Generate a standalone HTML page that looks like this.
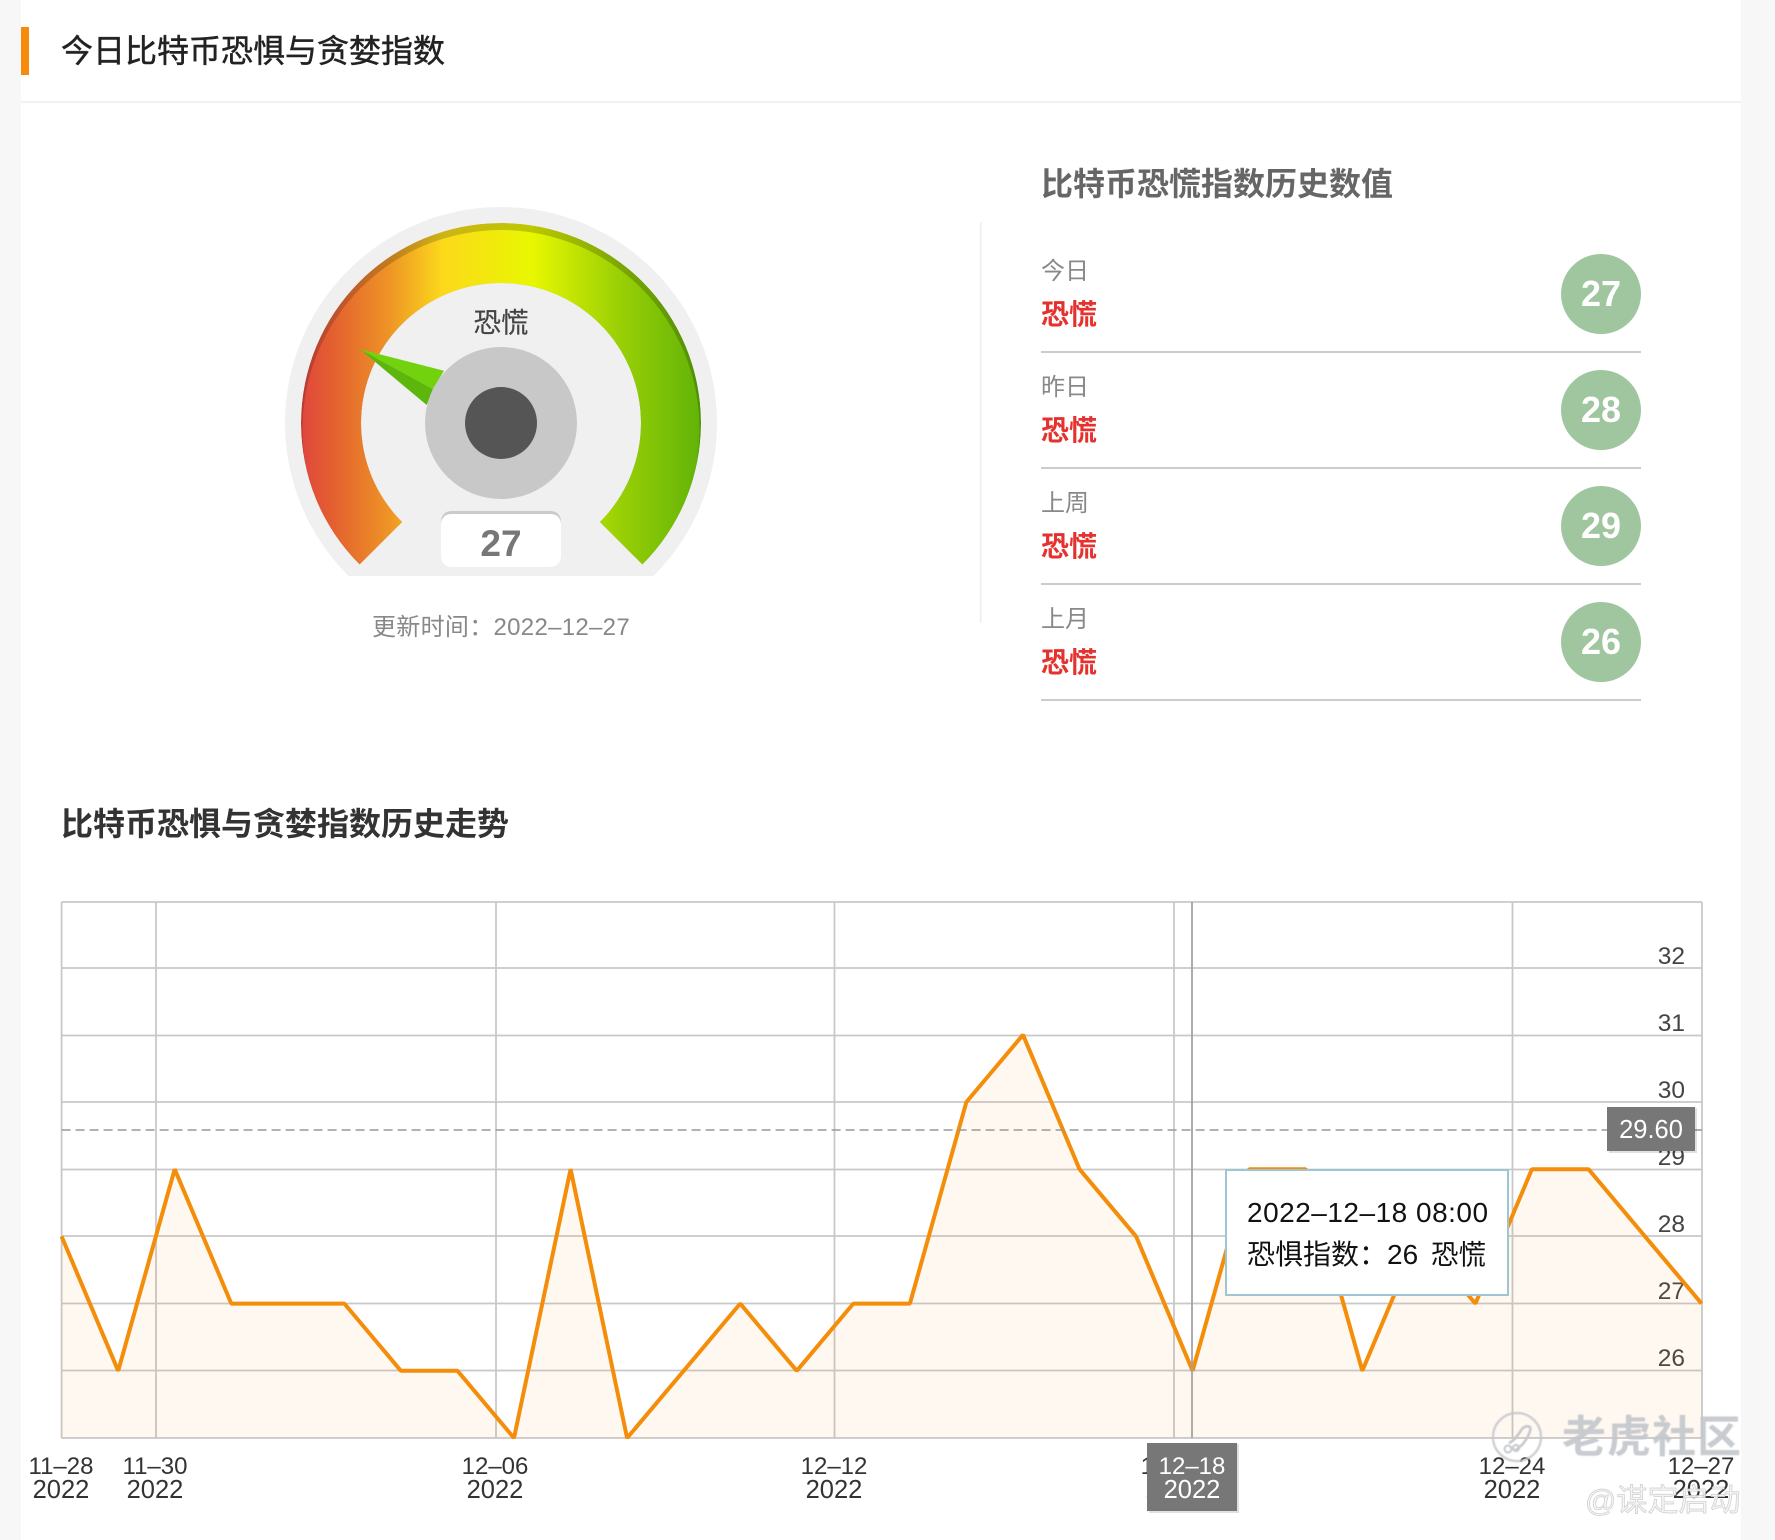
<!DOCTYPE html>
<html lang="zh-CN">
<head>
<meta charset="utf-8">
<title>今日比特币恐惧与贪婪指数</title>
<style>
html,body{margin:0;padding:0;background:#f7f7f7;}
body{width:1775px;height:1540px;overflow:hidden;position:relative;}
svg{position:absolute;left:0;top:0;display:block;}
text{font-family:"Liberation Sans","Noto Sans CJK SC",sans-serif;}
.t{font-weight:700;font-size:32px;}
.yl{font-size:24.5px;fill:#444;text-anchor:end;}
.xl{font-size:24px;fill:#333;text-anchor:middle;}
.xl .y{font-size:25.5px;}
.lab{font-size:24px;fill:#888;}
.red{font-size:28px;fill:#e5322f;font-weight:700;}
.num{font-size:36px;fill:#fff;font-weight:700;text-anchor:middle;}
.grid line{stroke:#c8c8c8;stroke-width:1.8;}
</style>
</head>
<body>
<svg width="1775" height="1540" viewBox="0 0 1775 1540" xmlns="http://www.w3.org/2000/svg">
<defs>
<linearGradient id="g" gradientUnits="userSpaceOnUse" x1="301" y1="0" x2="701" y2="0">
<stop offset="0" stop-color="#e0463e"/><stop offset=".08" stop-color="#e3602f"/><stop offset=".22" stop-color="#ee9426"/><stop offset=".355" stop-color="#fcd91b"/><stop offset=".577" stop-color="#e8f700"/><stop offset=".8" stop-color="#98cf05"/><stop offset="1" stop-color="#62b308"/>
</linearGradient>
<linearGradient id="gd" gradientUnits="userSpaceOnUse" x1="301" y1="0" x2="701" y2="0">
<stop offset="0" stop-color="#b93a33"/><stop offset=".22" stop-color="#c27a20"/><stop offset=".355" stop-color="#cdb416"/><stop offset=".577" stop-color="#bcc800"/><stop offset=".8" stop-color="#7ca604"/><stop offset="1" stop-color="#4f9006"/>
</linearGradient>
<clipPath id="arc"><path d="M359.6,564.4 A200,200 0 1 1 642.4,564.4 L600,522 A140,140 0 1 0 402,522 Z"/></clipPath>
<clipPath id="bot"><rect x="270" y="190" width="470" height="386"/></clipPath>
<clipPath id="wm"><rect x="1480" y="1390" width="261" height="140"/></clipPath>
<filter id="soft" x="-5%" y="-5%" width="110%" height="110%"><feGaussianBlur stdDeviation=".55"/></filter>
</defs>

<!-- panel -->
<rect x="21" y="0" width="1720" height="1540" fill="#fff"/>
<rect x="21" y="27" width="8" height="48" fill="#f78c0c"/>
<rect x="21" y="101" width="1720" height="2" fill="#f1f1f1"/>
<text x="61" y="62" font-size="32" fill="#222" stroke="#222" stroke-width=".45">今日比特币恐惧与贪婪指数</text>

<!-- gauge -->
<circle cx="501" cy="423" r="216" fill="#f0f0f0" clip-path="url(#bot)"/>
<g clip-path="url(#arc)">
<circle cx="501" cy="423" r="200" fill="url(#gd)"/>
<ellipse cx="501" cy="429" rx="198.5" ry="199" fill="url(#g)"/>
</g>
<polygon points="360,349.3 444,370.7 433,389" fill="#72d20d"/>
<polygon points="360,349.3 433,389 426.7,405" fill="#5db60b"/>
<circle cx="501" cy="423" r="76" fill="#c8c8c8"/>
<circle cx="501" cy="423" r="36" fill="#555"/>
<rect x="441" y="511" width="120" height="56" rx="10" fill="#cbcbcb"/>
<rect x="441" y="514" width="120" height="53" rx="10" fill="#fff"/>
<text x="501" y="556" font-size="37" font-weight="700" fill="#777" text-anchor="middle">27</text>
<text x="501" y="332" font-size="27.5" fill="#444" stroke="#444" stroke-width=".2" text-anchor="middle">恐慌</text>
<text x="501" y="635" font-size="24" fill="#888" text-anchor="middle" letter-spacing=".3">更新时间：2022–12–27</text>

<!-- divider -->
<rect x="980" y="222" width="1.6" height="401" fill="#eee"/>

<!-- history list -->
<text class="t" x="1041" y="195" fill="#666">比特币恐慌指数历史数值</text>

<text class="lab" x="1041" y="279">今日</text>
<text class="red" x="1041" y="324">恐慌</text>
<circle cx="1601" cy="294" r="40" fill="#9fc69f"/>
<text class="num" x="1601" y="306">27</text>
<rect x="1041" y="351" width="600" height="2" fill="#ccc"/>

<text class="lab" x="1041" y="395">昨日</text>
<text class="red" x="1041" y="440">恐慌</text>
<circle cx="1601" cy="410" r="40" fill="#9fc69f"/>
<text class="num" x="1601" y="422">28</text>
<rect x="1041" y="467" width="600" height="2" fill="#ccc"/>

<text class="lab" x="1041" y="511">上周</text>
<text class="red" x="1041" y="556">恐慌</text>
<circle cx="1601" cy="526" r="40" fill="#9fc69f"/>
<text class="num" x="1601" y="538">29</text>
<rect x="1041" y="583" width="600" height="2" fill="#ccc"/>

<text class="lab" x="1041" y="627">上月</text>
<text class="red" x="1041" y="672">恐慌</text>
<circle cx="1601" cy="642" r="40" fill="#9fc69f"/>
<text class="num" x="1601" y="654">26</text>
<rect x="1041" y="699" width="600" height="2" fill="#ccc"/>

<!-- chart title -->
<text class="t" x="61" y="835" fill="#333">比特币恐惧与贪婪指数历史走势</text>

<!-- grid -->
<g class="grid">
<line x1="61.6" y1="902" x2="1702" y2="902"/>
<line x1="61.6" y1="968" x2="1702" y2="968"/>
<line x1="61.6" y1="1035.5" x2="1702" y2="1035.5"/>
<line x1="61.6" y1="1102" x2="1702" y2="1102"/>
<line x1="61.6" y1="1169.5" x2="1702" y2="1169.5"/>
<line x1="61.6" y1="1236" x2="1702" y2="1236"/>
<line x1="61.6" y1="1303.5" x2="1702" y2="1303.5"/>
<line x1="61.6" y1="1370.5" x2="1702" y2="1370.5"/>
<line x1="61.6" y1="1438" x2="1702" y2="1438"/>
<line x1="61.6" y1="902" x2="61.6" y2="1438"/>
<line x1="156" y1="902" x2="156" y2="1438"/>
<line x1="496" y1="902" x2="496" y2="1438"/>
<line x1="834.5" y1="902" x2="834.5" y2="1438"/>
<line x1="1174" y1="902" x2="1174" y2="1438"/>
<line x1="1512.5" y1="902" x2="1512.5" y2="1438"/>
<line x1="1702" y1="902" x2="1702" y2="1438"/>
</g>

<!-- y labels -->
<text class="yl" x="1685" y="964">32</text>
<text class="yl" x="1685" y="1031">31</text>
<text class="yl" x="1685" y="1098">30</text>
<text class="yl" x="1685" y="1165">29</text>
<text class="yl" x="1685" y="1232">28</text>
<text class="yl" x="1685" y="1299">27</text>
<text class="yl" x="1685" y="1366">26</text>

<!-- area + line -->
<path d="M61.6,1438 L61.6,1236.4 118.2,1370.8 174.7,1169.2 231.3,1303.6 287.8,1303.6 344.4,1303.6 400.9,1370.8 457.5,1370.8 514,1438 570.6,1169.2 627.1,1438 683.7,1370.8 740.2,1303.6 796.8,1370.8 853.3,1303.6 909.9,1303.6 966.4,1102 1023,1034.8 1079.5,1169.2 1136.1,1236.4 1192.6,1370.8 1249.2,1169.2 1305.7,1169.2 1362.3,1370.8 1418.8,1236.4 1475.4,1303.6 1531.9,1169.2 1588.5,1169.2 1645,1236.4 1701.6,1303.6 L1701.6,1438 Z" fill="#f78c0c" fill-opacity=".06"/>
<polyline points="61.6,1236.4 118.2,1370.8 174.7,1169.2 231.3,1303.6 287.8,1303.6 344.4,1303.6 400.9,1370.8 457.5,1370.8 514,1438 570.6,1169.2 627.1,1438 683.7,1370.8 740.2,1303.6 796.8,1370.8 853.3,1303.6 909.9,1303.6 966.4,1102 1023,1034.8 1079.5,1169.2 1136.1,1236.4 1192.6,1370.8 1249.2,1169.2 1305.7,1169.2 1362.3,1370.8 1418.8,1236.4 1475.4,1303.6 1531.9,1169.2 1588.5,1169.2 1645,1236.4 1701.6,1303.6" fill="none" stroke="#f48d0a" stroke-width="4" stroke-linejoin="bevel"/>

<!-- dashed + crosshair -->
<line x1="61.6" y1="1130" x2="1607" y2="1130" stroke="#999" stroke-width="1.6" stroke-dasharray="9 5"/>
<line x1="1695" y1="1130" x2="1702" y2="1130" stroke="#999" stroke-width="1.6"/>
<line x1="1192" y1="902" x2="1192" y2="1438" stroke="#a3a3a3" stroke-width="1.8"/>

<!-- x labels -->
<text class="xl"><tspan x="61" y="1474">11–28</tspan><tspan class="y" x="61" y="1498">2022</tspan></text>
<text class="xl"><tspan x="155" y="1474">11–30</tspan><tspan class="y" x="155" y="1498">2022</tspan></text>
<text class="xl"><tspan x="495" y="1474">12–06</tspan><tspan class="y" x="495" y="1498">2022</tspan></text>
<text class="xl"><tspan x="834" y="1474">12–12</tspan><tspan class="y" x="834" y="1498">2022</tspan></text>
<text class="xl"><tspan x="1174" y="1474">12–18</tspan><tspan class="y" x="1174" y="1498">2022</tspan></text>
<text class="xl"><tspan x="1512" y="1474">12–24</tspan><tspan class="y" x="1512" y="1498">2022</tspan></text>
<text class="xl"><tspan x="1701" y="1474">12–27</tspan><tspan class="y" x="1701" y="1498">2022</tspan></text>

<!-- axis pointers -->
<rect x="1609" y="1108" width="88" height="45" fill="#000" opacity=".12"/>
<rect x="1607" y="1107" width="88" height="44" fill="#777"/>
<text x="1651" y="1138" font-size="25.5" fill="#fff" text-anchor="middle">29.60</text>
<rect x="1149" y="1444" width="90" height="69" fill="#000" opacity=".12"/>
<rect x="1147" y="1443" width="90" height="68" fill="#777"/>
<text font-size="24" fill="#fff" text-anchor="middle"><tspan x="1192" y="1474">12–18</tspan><tspan x="1192" y="1498" font-size="25.5">2022</tspan></text>

<!-- tooltip -->
<rect x="1226" y="1170" width="282" height="125" fill="#fff" stroke="#9dc5d3" stroke-width="2"/>
<text x="1247" y="1222" font-size="28" fill="#111" letter-spacing=".5">2022–12–18 08:00</text>
<text x="1247" y="1264" font-size="28" fill="#111">恐惧指数：<tspan x="1387">26</tspan><tspan x="1431" font-size="27.5">恐慌</tspan></text>

<!-- watermark -->
<g clip-path="url(#wm)">
<g filter="url(#soft)">
<circle cx="1517" cy="1437" r="24" fill="none" stroke="#c6c8cc" stroke-width="2.4" opacity=".85"/>
<path d="M1509,1443 C1514,1441 1518,1435 1522,1429 C1526,1425 1532,1425 1530,1431 C1528,1438 1522,1447 1514,1451" fill="none" stroke="#c6c8cc" stroke-width="2.6"/>
<circle cx="1508" cy="1449" r="3.5" fill="none" stroke="#c6c8cc" stroke-width="2"/>
<circle cx="1516" cy="1448" r="3" fill="none" stroke="#c6c8cc" stroke-width="2"/>
<text x="1562" y="1452" font-size="44" font-weight="700" fill="#c4c7cc" letter-spacing="1" opacity=".92">老虎社区</text>
</g>
<text x="1585" y="1511" font-size="31" fill="#f4f4f4" stroke="#c8c8c8" stroke-width=".7" opacity=".9">@谋定启动</text>
</g>
</svg>
</body>
</html>
